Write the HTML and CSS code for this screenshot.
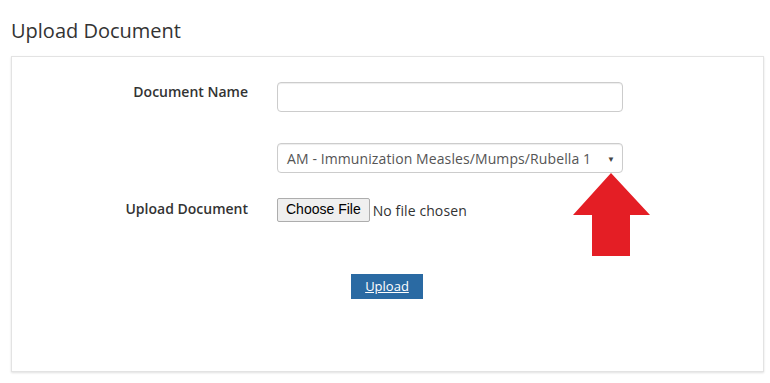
FILE: index.html
```html
<!DOCTYPE html>
<html lang="en">
<head>
<meta charset="utf-8">
<title>Upload Document</title>
<link rel="stylesheet" href="styles.css">
</head>
<body>
<div class="page">
  <h1 class="title">Upload Document</h1>
  <div class="panel">
    <form class="form">
      <div class="row row-name">
        <label class="label">Document Name</label>
        <div class="field"><input class="text-input" type="text"></div>
      </div>
      <div class="row row-select">
        <div class="label"></div>
        <div class="field">
          <div class="select">
            <span class="select-text">AM - Immunization Measles/Mumps/Rubella 1</span>
            <span class="caret">▼</span>
          </div>
        </div>
      </div>
      <div class="row row-file">
        <label class="label">Upload Document</label>
        <div class="field file-field">
          <span class="file-btn">Choose File</span>
          <span class="file-status">No file chosen</span>
        </div>
      </div>
      <div class="actions">
        <a class="upload-btn" href="#">Upload</a>
      </div>
    </form>
    <svg class="red-arrow" width="80" height="84" viewBox="0 0 80 84">
      <polygon points="39,0 78,42 58,42 58,83 20,83 20,42 1,42" fill="#e41e25"/>
    </svg>
  </div>
</div>
</body>
</html>
```

FILE: styles.css
```css
* { box-sizing: border-box; }
html, body { margin: 0; padding: 0; background: #fff; }
body {
  font-family: "Open Sans", "Liberation Sans", sans-serif;
  color: #333;
  width: 770px;
  height: 383px;
  overflow: hidden;
}
.page {
  padding: 16px 6px 0 11px;
}
.title {
  margin: 0;
  font-size: 20px;
  font-weight: 400;
  line-height: 30px;
  color: #333;
}
.panel {
  position: relative;
  margin-top: 10px;
  width: 753px;
  height: 316px;
  border: 1px solid #e3e3e3;
  box-shadow: 0 1px 2px rgba(0,0,0,0.12);
  background: #fff;
}
.form {
  padding-top: 25px;
}
.row {
  display: flex;
  align-items: flex-start;
}
.label {
  width: 236px;
  flex: none;
  text-align: right;
  font-size: 14px;
  font-weight: 600;
  color: #333;
  line-height: 20px;
  padding-top: 0;
}
.field {
  margin-left: 29px;
  width: 346px;
}
.text-input {
  display: block;
  width: 346px;
  height: 30px;
  border: 1px solid #ccc;
  border-radius: 4px;
  box-shadow: inset 0 1px 1px rgba(0,0,0,0.075);
  padding: 4px 10px;
  font-family: inherit;
  font-size: 14px;
  outline: none;
}
.row-select { margin-top: 31px; }
.select {
  display: flex;
  align-items: center;
  justify-content: space-between;
  width: 346px;
  height: 30px;
  border: 1px solid #ccc;
  border-radius: 4px;
  padding: 0 7px 0 9px;
  font-size: 14px;
  letter-spacing: 0.1px;
  color: #555;
  box-shadow: inset 0 1px 1px rgba(0,0,0,0.075);
}
.caret {
  font-size: 8px;
  color: #444;
}
.row-file { margin-top: 25px; align-items: center; }
.row-file .label { padding-bottom: 2px; }
.file-field {
  display: flex;
  align-items: center;
}
.file-btn {
  display: inline-block;
  height: 24px;
  line-height: 21px;
  padding: 0 8px;
  border: 1px solid #adadad;
  border-radius: 2px;
  background: #efefef;
  font-family: "Liberation Sans", Arial, sans-serif;
  font-size: 14px;
  color: #000;
}
.file-status {
  margin-left: 3px;
  font-size: 14px;
  letter-spacing: 0.1px;
  color: #333;
}
.actions {
  margin-top: 52px;
  padding-left: 339px;
}
.upload-btn {
  display: inline-block;
  width: 72px;
  height: 25px;
  line-height: 25px;
  text-align: center;
  background: #2a6aa3;
  color: #fff;
  font-size: 13px;
  text-decoration: underline;
}
.red-arrow {
  position: absolute;
  left: 560px;
  top: 116px;
}
```
